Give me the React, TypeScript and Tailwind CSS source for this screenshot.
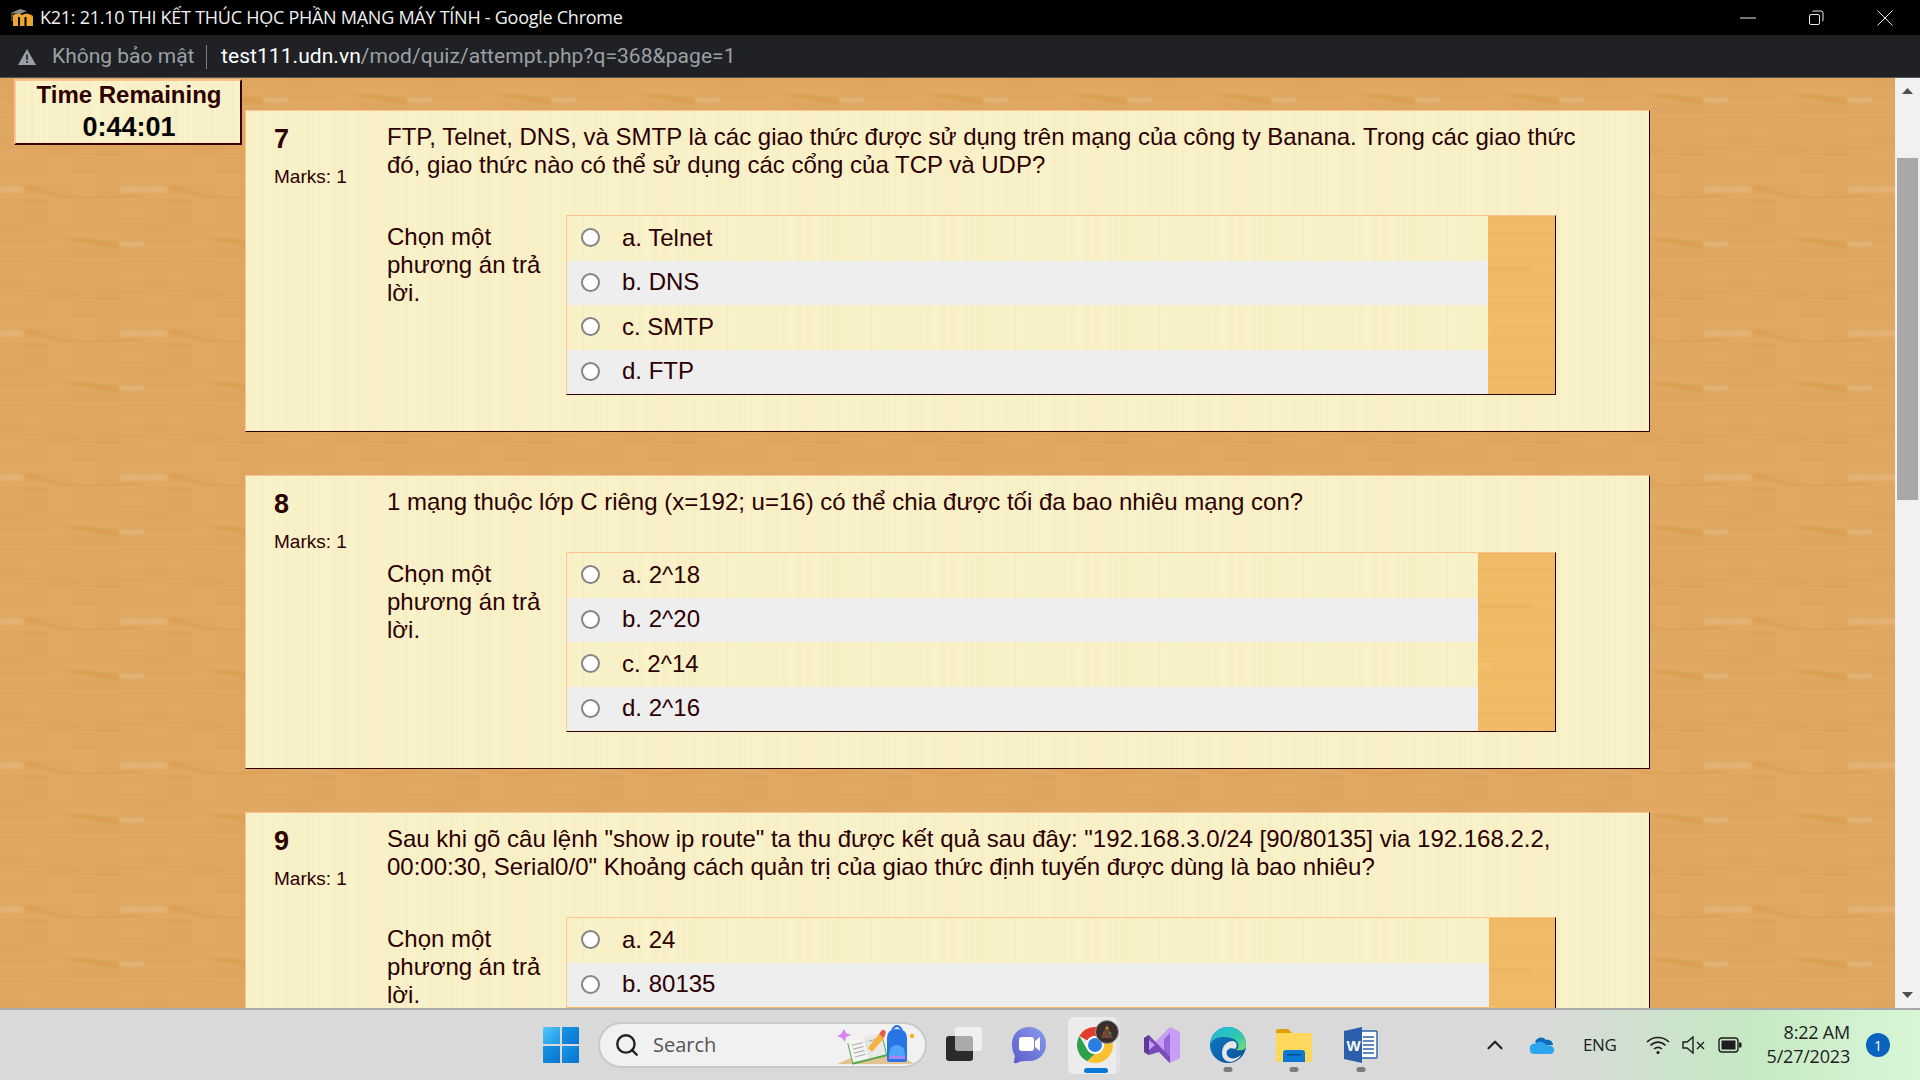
import React from "react";
import { Search, ChevronUp } from "lucide-react";

function rnd(seed: number) {
  const x = Math.sin(seed * 127.1 + 311.7) * 43758.5453;
  return x - Math.floor(x);
}

const woodLines = Array.from({ length: 72 }, (_, i) => ({
  y: i * 2,
  o: 0.05 + rnd(i) * 0.12,
  dark: rnd(i + 100) > 0.5,
}));
const woodBlocks = Array.from({ length: 36 }, (_, i) => ({
  x: (i % 6) * 24,
  y: Math.floor(i / 6) * 24,
  o: rnd(i + 300) * 0.09,
  light: rnd(i + 400) > 0.5,
}));
const creamLines = Array.from({ length: 72 }, (_, i) => ({
  x: i * 2,
  w: 1 + Math.floor(rnd(i + 500) * 4),
  o: rnd(i + 600) * 0.35,
  warm: rnd(i + 700) > 0.45,
}));

function Defs() {
  return (
    <svg width="0" height="0" className="absolute">
      <defs>
        <filter id="soft" x="-10%" y="-50%" width="120%" height="200%">
          <feGaussianBlur stdDeviation="0.9" />
        </filter>
        <pattern id="wood" width="144" height="144" patternUnits="userSpaceOnUse">
          <rect width="144" height="144" fill="#dfa761" />
          {woodBlocks.map((b, i) => (
            <rect key={i} x={b.x} y={b.y} width="24" height="24" fill={b.light ? "#e6b06c" : "#dc9f55"} opacity={b.o * 2} />
          ))}
          {woodLines.map((l, i) => (
            <rect key={i} x="0" y={l.y} width="144" height="1" fill={l.dark ? "#d29b55" : "#e8b474"} opacity={l.o * 1.2} />
          ))}
          <g filter="url(#soft)">
            <path d="M24 109 C34 108 44 111 52 115 C72 120 96 118 144 116 L144 118 C96 122 60 122 46 116 C40 113 32 112 24 113 Z" fill="#dc9f50" opacity="0.8" />
            <rect x="0" y="108" width="24" height="7" fill="#e6b67c" opacity="0.7" />
            <rect x="120" y="108" width="24" height="7" fill="#e6b67c" opacity="0.7" />
            <path d="M70 16 C88 16 100 20 119 21 L119 25 C100 26 90 22 70 18 Z" fill="#d99c4e" opacity="0.8" />
            <rect x="120" y="19" width="24" height="6" fill="#e6b67c" opacity="0.7" />
            <path d="M0 56 C30 52 60 60 144 54 L144 56 C60 62 30 54 0 58 Z" fill="#e6b06c" opacity="0.5" />
            <rect x="48" y="70" width="32" height="6" fill="#d99c4e" opacity="0.35" />
            <rect x="96" y="72" width="24" height="6" fill="#d99c4e" opacity="0.35" />
          </g>
        </pattern>
        <pattern id="wood2" width="144" height="144" patternUnits="userSpaceOnUse">
          <rect width="144" height="144" fill="#f1ba65" />
          {woodLines.map((l, i) => (
            <rect key={i} x="0" y={l.y} width="144" height="1" fill={l.dark ? "#e3aa55" : "#f5c479"} opacity={l.o * 1.3} />
          ))}
          <rect x="30" y="50" width="70" height="5" fill="#e6ab55" opacity="0.3" />
          <rect x="0" y="110" width="60" height="6" fill="#f7c878" opacity="0.4" />
        </pattern>
        <pattern id="cream" width="144" height="144" patternUnits="userSpaceOnUse">
          <rect width="144" height="144" fill="#f8f1c8" />
          {creamLines.map((l, i) => (
            <rect key={i} x={l.x} y="0" width={l.w} height="144" fill={l.warm ? "#f6e4b8" : "#fbf6d4"} opacity={l.o * 0.75} />
          ))}
        </pattern>
      </defs>
    </svg>
  );
}

function Texture({ id }: { id: string }) {
  return (
    <svg className="absolute inset-0 w-full h-full pointer-events-none" aria-hidden="true">
      <rect width="100%" height="100%" fill={`url(#${id})`} />
    </svg>
  );
}

function Row({ text, gray, width }: { text: string; gray: boolean; width: string }) {
  return (
    <div className={`relative flex items-center pl-[14px] pb-[2px] ${width} ${gray ? "h-[44px] bg-[#eeeeee]" : "h-[45px]"}`}>
      {!gray && <Texture id="cream" />}
      <span className="relative w-[19px] h-[19px] rounded-full bg-white border-2 border-[#858585]" />
      <span className="relative ml-[22px]">{text}</span>
    </div>
  );
}

type Q = { n: string; text: string[]; answers: string[]; width: string };

function Question({ q }: { q: Q }) {
  return (
    <section className="relative w-[1405px] shrink-0 border border-t-[#ffc48c] border-l-[#ffc48c] border-r-[#2d0000] border-b-[#2d0000] pt-[12px] pb-[36px] pl-[28px] flex text-[#2d0000]">
      <Texture id="cream" />
      <div className="relative w-[113px] shrink-0">
        <div className="text-[27px] font-bold leading-[30px] mt-[1px]">{q.n}</div>
        <div className="text-[19px] leading-[24px] mt-[11px]">Marks: 1</div>
      </div>
      <div className="relative w-[1210px] shrink-0">
        <div className="text-[24px] leading-[28px]">
          {q.text.map((t, i) => (
            <div key={i} className="whitespace-nowrap">{t}</div>
          ))}
        </div>
        <div className="flex mt-[36px]">
          <div className="w-[179px] shrink-0 pt-[8px] pr-[6px] text-[24px] leading-[28px]">Chọn một phương án trả lời.</div>
          <div className="relative w-[990px] shrink-0 min-h-[180px] border border-t-[#ffc48c] border-l-[#ffc48c] border-r-[#2d0000] border-b-[#2d0000] text-[24px]">
            <Texture id="wood2" />
            {q.answers.map((a, i) => (
              <Row key={a} text={a} gray={i % 2 === 1} width={q.width} />
            ))}
          </div>
        </div>
      </div>
    </section>
  );
}

const questions: Q[] = [
  {
    n: "7",
    text: [
      "FTP, Telnet, DNS, và SMTP là các giao thức được sử dụng trên mạng của công ty Banana. Trong các giao thức",
      "đó, giao thức nào có thể sử dụng các cổng của TCP và UDP?",
    ],
    answers: ["a. Telnet", "b. DNS", "c. SMTP", "d. FTP"],
    width: "w-[921px]",
  },
  {
    n: "8",
    text: ["1 mạng thuộc lớp C riêng (x=192; u=16) có thể chia được tối đa bao nhiêu mạng con?"],
    answers: ["a. 2^18", "b. 2^20", "c. 2^14", "d. 2^16"],
    width: "w-[911px]",
  },
  {
    n: "9",
    text: [
      'Sau khi gõ câu lệnh "show ip route" ta thu được kết quả sau đây: "192.168.3.0/24 [90/80135] via 192.168.2.2,',
      '00:00:30, Serial0/0" Khoảng cách quản trị của giao thức định tuyến được dùng là bao nhiêu?',
    ],
    answers: ["a. 24", "b. 80135"],
    width: "w-[922px]",
  },
];

function MoodleIcon() {
  return (
    <svg width="24" height="20" viewBox="0 0 24 20" className="shrink-0">
      <path d="M3 7 H8 V18 H3 Z M10 7 H14.5 V18 H10 Z M16.5 7 H21 Q23 7 23 9 V18 H16.5 Z" fill="#eda531" />
      <path d="M3 7 Q8 4 12 7 Q17 4 21 7 L21 9 H3 Z" fill="#eda531" />
      <path d="M1 5 L10 1 L17 3 L10 6 Z" fill="#8c8c8c" />
      <path d="M2 5 V13" stroke="#8c8c8c" strokeWidth="1" />
    </svg>
  );
}

function TitleBar() {
  return (
    <header className="h-[35px] bg-black flex items-center pl-[10px] text-white shrink-0">
      <MoodleIcon />
      <span className="ml-[6px] text-[18px] tracking-[-0.26px] whitespace-nowrap font-['Open_Sans',sans-serif] text-[#f0f0f0]">
        K21: 21.10 THI KẾT THÚC HỌC PHẦN MẠNG MÁY TÍNH - Google Chrome
      </span>
      <div className="ml-auto flex items-center h-full">
        <svg width="16" height="2" className="mr-[52px]"><rect width="16" height="1" y="0.5" fill="#e8e8e8" /></svg>
        <svg width="16" height="16" viewBox="0 0 16 16" fill="none" stroke="#e8e8e8" strokeWidth="1" className="mr-[53px]">
          <rect x="1.5" y="4.5" width="10" height="10" rx="1.5" />
          <path d="M4.5 2 Q5 1 6 1 H13 Q15 1 15 3 V10 Q15 11 14 11.5" />
        </svg>
        <svg width="16" height="16" viewBox="0 0 16 16" stroke="#e8e8e8" strokeWidth="1" className="mr-[27px]">
          <path d="M0.5 0.5 L15.5 15.5 M15.5 0.5 L0.5 15.5" />
        </svg>
      </div>
    </header>
  );
}

function AddressBar() {
  return (
    <div className="h-[43px] bg-[#202124] border-b border-[#555658] flex items-center pl-[17px] pt-[2px] shrink-0 font-['Roboto',sans-serif] text-[21px]">
      <svg width="20" height="18" viewBox="0 0 20 18" className="shrink-0">
        <path d="M10 1 L19 17 H1 Z" fill="#9aa0a6" />
        <rect x="9.2" y="6.5" width="1.6" height="5.5" fill="#202124" />
        <rect x="9.2" y="13" width="1.6" height="1.8" fill="#202124" />
      </svg>
      <span className="ml-[15px] text-[#9aa0a6] w-[142px] whitespace-nowrap">Không bảo mật</span>
      <span className="ml-[12px] w-px h-[24px] bg-[#7a7d82]" />
      <span className="ml-[14px] whitespace-nowrap tracking-[0.06px]">
        <span className="text-white">test111.udn.vn</span>
        <span className="text-[#9aa0a6]">/mod/quiz/attempt.php?q=368&amp;page=1</span>
      </span>
    </div>
  );
}

function Scrollbar() {
  return (
    <div className="w-[25px] bg-[#f1f1f1] shrink-0 relative flex flex-col items-center">
      <svg width="11" height="6" className="mt-[10px]"><path d="M0 6 L5.5 0 L11 6 Z" fill="#505050" /></svg>
      <div className="mt-[64px] w-[21px] h-[342px] bg-[#a8a8a8]" />
      <svg width="11" height="6" className="mt-auto mb-[10px]"><path d="M0 0 L5.5 6 L11 0 Z" fill="#505050" /></svg>
    </div>
  );
}

function WinLogo() {
  return (
    <svg width="36" height="36" viewBox="0 0 36 36">
      <defs>
        <linearGradient id="w1" x1="0" y1="0" x2="1" y2="1">
          <stop offset="0" stopColor="#52c7fa" />
          <stop offset="1" stopColor="#1a96e4" />
        </linearGradient>
        <linearGradient id="w2" x1="0" y1="0" x2="1" y2="1">
          <stop offset="0" stopColor="#1b97e5" />
          <stop offset="1" stopColor="#0673cf" />
        </linearGradient>
      </defs>
      <path d="M1 0 H17 V17 H0 V1 Q0 0 1 0 Z" fill="url(#w1)" />
      <path d="M19 0 H35 Q36 0 36 1 V17 H19 Z" fill="url(#w2)" />
      <path d="M0 19 H17 V36 H1 Q0 36 0 35 Z" fill="url(#w2)" />
      <path d="M19 19 H36 V35 Q36 36 35 36 H19 Z" fill="url(#w2)" />
    </svg>
  );
}

function SearchArt() {
  return (
    <svg width="84" height="44" viewBox="0 0 84 44" className="absolute right-[5px] top-[-2px]">
      <path d="M1 42 L24 32 H62 L78 42 Z" fill="#e3c392" />
      <path d="M8 7 L10 11 L15 13 L10 15 L9 20 L6 16 L1 14 L5 12 Z" fill="#d685f0" />
      <circle cx="46" cy="26" r="2.2" fill="#7bdcf0" />
      <circle cx="76" cy="14" r="2.2" fill="#fbb024" />
      <g transform="rotate(-14 30 26)">
        <rect x="13" y="17" width="36" height="22" fill="#55a84a" />
        <rect x="14" y="15" width="17" height="22" fill="#f3f3f0" />
        <rect x="31" y="15" width="17" height="22" fill="#e8e8e6" />
        <path d="M17 20 H28 M17 24 H28 M17 28 H28 M17 32 H28 M34 20 H44" stroke="#aaa" strokeWidth="1" />
      </g>
      <path d="M32 26 L43 12 L48 16 L36 30 Z" fill="#f5b23d" />
      <path d="M43 12 L46 8 Q48 7 50 10 L48 16 Z" fill="#e85a4f" />
      <path d="M51 38 V16 Q51 7 61 7 Q71 7 71 16 V38 Q71 40 69 40 H53 Q51 40 51 38 Z" fill="#2a75e6" />
      <path d="M56 8 Q61 0 66 8" fill="none" stroke="#2a75e6" strokeWidth="2" />
      <path d="M53 34 Q53 23 61 23 Q69 23 69 34 Z" fill="#4fa4fb" />
      <path d="M53 34 H69 V37 H53 Z" fill="#a58af5" />
    </svg>
  );
}

function MeetIcon() {
  return (
    <svg width="34" height="38" viewBox="0 0 34 38">
      <defs>
        <linearGradient id="m1" x1="0" y1="1" x2="1" y2="0">
          <stop offset="0" stopColor="#5b5bc8" />
          <stop offset="1" stopColor="#8a9cf0" />
        </linearGradient>
      </defs>
      <path d="M17 1 C27 1 34 8 34 18 C34 28 27 35 17 35 C12 35 9 35 5 37 Q1 38 2 35 L3 30 C1 27 0 23 0 18 C0 8 7 1 17 1 Z" fill="url(#m1)" />
      <rect x="7" y="11" width="15" height="14" rx="3" fill="#fff" />
      <path d="M23 15 L28 11 V25 L23 21 Z" fill="#fff" />
    </svg>
  );
}

function ChromeIcon() {
  return (
    <svg width="36" height="36" viewBox="0 0 36 36">
      <path d="M2.4 9 A18 18 0 0 1 33.6 9 L18 9 A9 9 0 0 0 10.2 13.5 Z" fill="#e33b2e" />
      <path d="M2.4 9 L10.2 22.5 A9 9 0 0 0 18 27 L10.2 34.2 A18 18 0 0 1 2.4 9 Z" fill="#2ca24c" />
      <path d="M33.6 9 A18 18 0 0 1 10.2 34.2 L18 27 A9 9 0 0 0 25.8 22.5 A9 9 0 0 0 25.8 13.5 L18 9 Z" fill="#fbc02d" />
      <circle cx="18" cy="18" r="9" fill="#fff" />
      <circle cx="18" cy="18" r="7" fill="#2a7de1" />
    </svg>
  );
}

function Avatar() {
  return (
    <svg width="24" height="24" viewBox="0 0 24 24" className="absolute right-[-3px] top-[3px]">
      <circle cx="12" cy="12" r="11.5" fill="#3a2e2c" stroke="#9a9a9a" strokeWidth="1" />
      <path d="M12 4 L18 18 H6 Z" fill="#6b4a32" />
      <circle cx="12" cy="8" r="1.3" fill="#c9962d" />
      <circle cx="9" cy="13" r="1.3" fill="#b1382e" />
      <circle cx="15" cy="13" r="1.3" fill="#3f8a4a" />
      <circle cx="12" cy="16" r="1.3" fill="#7a3f9a" />
    </svg>
  );
}

function VSIcon() {
  return (
    <svg width="36" height="36" viewBox="0 0 36 36">
      <path d="M26 0 L36 5 V31 L26 36 L8 18 Z" fill="#c79ef5" />
      <path d="M26 0 V36 L20 30 V12 L26 6 Z" fill="#9767d8" />
      <path d="M0 11 L5 8 L26 30 V36 L15 25 L5 28 L0 25 Z" fill="#7a4bb8" />
      <path d="M5 13 V23 L11 18 Z" fill="#c79ef5" />
      <path d="M0 11 L5 8 V28 L0 25 Z" fill="#5f3b98" />
    </svg>
  );
}

function EdgeIcon() {
  return (
    <svg width="36" height="36" viewBox="0 0 36 36">
      <defs>
        <linearGradient id="e1" x1="0" y1="0" x2="1" y2="1">
          <stop offset="0" stopColor="#1fb5e8" />
          <stop offset="0.6" stopColor="#30c9a9" />
          <stop offset="1" stopColor="#7ee06a" />
        </linearGradient>
        <linearGradient id="e2" x1="0" y1="0" x2="1" y2="1">
          <stop offset="0" stopColor="#0f7dc8" />
          <stop offset="1" stopColor="#0a4f96" />
        </linearGradient>
      </defs>
      <circle cx="18" cy="18" r="18" fill="url(#e2)" />
      <path d="M0 17 C1 7 9 0 18 0 C29 0 36 8 36 18 C36 23 31 24 26 23 C30 21 29 15 24 12 C15 8 3 10 0 17 Z" fill="url(#e1)" />
      <path d="M22 14 C27 14 28 19 25 22 C21 20 15 22 17 28 C19 32 25 33 31 28 C27 35 18 37 14 32 C10 27 12 15 22 14 Z" fill="#e6e6e6" />
    </svg>
  );
}

function FolderIcon() {
  return (
    <svg width="36" height="36" viewBox="0 0 36 36">
      <path d="M0 4 Q0 2 2 2 H12 L16 6 H34 Q36 6 36 8 V12 H0 Z" fill="#dfa000" />
      <rect x="0" y="6" width="36" height="29" rx="1" fill="#fdd85c" />
      <path d="M7 35 V26 Q7 23 10 23 H26 Q29 23 29 26 V35 Z" fill="#0c78d2" />
      <rect x="11" y="27" width="14" height="1.6" fill="#064f96" />
    </svg>
  );
}

function WordIcon() {
  return (
    <svg width="34" height="36" viewBox="0 0 34 36">
      <path d="M16 4 H32 Q33 4 33 5 V30 Q33 31 32 31 H16 Z" fill="#fff" stroke="#2b5fab" strokeWidth="1.4" />
      <path d="M19 10 H30 M19 14 H30 M19 18 H30 M19 22 H30 M19 26 H30" stroke="#2b5fab" strokeWidth="1.4" />
      <path d="M0 4 L18 0 V36 L0 32 Z" fill="#2b5fab" />
      <text x="2.5" y="24" fontFamily="'Liberation Sans', sans-serif" fontWeight="700" fontSize="15" fill="#fff">W</text>
    </svg>
  );
}

function Dot() {
  return <span className="absolute left-1/2 -translate-x-1/2 top-[40px] w-[9px] h-[5px] rounded-full bg-[#7b7b7b]" />;
}

function Taskbar() {
  return (
    <footer className="h-[72px] shrink-0 border-t-2 border-[#a9a9a9] bg-[linear-gradient(90deg,#d9d9d9_0%,#d9d9d9_80%,#c6e8c4_91%,#d8f6d6_100%)] flex items-center pl-[543px] text-[#1d1d1d] font-['Open_Sans',sans-serif]">
      <WinLogo />
      <div className="relative ml-[19px] w-[329px] h-[46px] rounded-full bg-[#f1f1f1] border-2 border-[#c9c9c9] flex items-center pl-[14px]">
        <Search size={26} strokeWidth={2.2} className="text-[#222]" />
        <span className="ml-[13px] text-[20px] text-[#555]">Search</span>
        <SearchArt />
      </div>
      <div className="relative ml-[19px] w-[36px] h-[36px]">
        <div className="absolute left-0 top-[9px] w-[27px] h-[25px] rounded-[3px] bg-[#2b2b2b]" />
        <div className="absolute left-[9px] top-0 w-[27px] h-[24px] rounded-[3px] bg-[#ffffff]/60" />
      </div>
      <div className="ml-[30px]"><MeetIcon /></div>
      <div className="relative ml-[22px] w-[52px] h-[57px] rounded-[6px] bg-[#ececec] border-r-4 border-[#e2e2e2] flex justify-center items-center pl-[5px]">
        <ChromeIcon />
        <Avatar />
        <span className="absolute left-[16px] bottom-[1px] w-[24px] h-[5px] rounded-full bg-[#0a78d6]" />
      </div>
      <div className="ml-[24px]"><VSIcon /></div>
      <div className="relative ml-[30px]"><EdgeIcon /><Dot /></div>
      <div className="relative ml-[30px]"><FolderIcon /><Dot /></div>
      <div className="relative ml-[32px]"><WordIcon /><Dot /></div>

      <ChevronUp size={26} strokeWidth={2} className="ml-[104px] text-[#222]" />
      <svg width="26" height="18" viewBox="0 0 26 18" className="ml-[21px]">
        <path d="M6 6 C8 1 14 0 17 4 C21 3 24 6 24 9 L10 10 Z" fill="#0f6cbd" />
        <path d="M1 14 C0 10 3 7 6 8 C10 4 16 6 18 10 C22 9 26 11 25 15 C25 17 23 18 21 18 H5 C3 18 1 17 1 14 Z" fill="#2aa5ee" />
      </svg>
      <span className="ml-[28px] text-[17px] w-[36px] tracking-[-0.4px]">ENG</span>
      <svg width="24" height="20" viewBox="0 0 24 20" fill="none" stroke="#1d1d1d" strokeWidth="1.6" className="ml-[27px]">
        <path d="M1 7 C7 1 17 1 23 7 M4.5 10.5 C9 6 15 6 19.5 10.5 M8 14 C10.5 12 13.5 12 16 14" />
        <circle cx="12" cy="17.5" r="1.6" fill="#1d1d1d" stroke="none" />
      </svg>
      <svg width="24" height="18" viewBox="0 0 24 18" fill="none" stroke="#1d1d1d" strokeWidth="1.4" className="ml-[12px]">
        <path d="M1 6 H5 L11 1 V17 L5 12 H1 Z" />
        <path d="M15 6 L22 13 M22 6 L15 13" />
      </svg>
      <svg width="24" height="16" viewBox="0 0 24 16" className="ml-[12px]">
        <rect x="1" y="1" width="19" height="14" rx="3" fill="none" stroke="#1d1d1d" strokeWidth="1.4" />
        <rect x="3.5" y="3.5" width="14" height="9" fill="#1d1d1d" />
        <path d="M21 5.5 H22.5 Q23.5 5.5 23.5 6.5 V9.5 Q23.5 10.5 22.5 10.5 H21 Z" fill="#1d1d1d" />
      </svg>
      <div className="ml-[22px] w-[86px] flex flex-col items-end text-[18px] leading-[24px] whitespace-nowrap tracking-[-0.2px] pb-[2px]">
        <span>8:22 AM</span>
        <span>5/27/2023</span>
      </div>
      <span className="ml-[16px] w-[24px] h-[24px] rounded-full bg-[#0a63bd] text-white text-[14px] flex items-center justify-center">1</span>
    </footer>
  );
}

export default function App() {
  return (
    <div className="w-[1920px] h-[1080px] overflow-hidden flex flex-col font-['Liberation_Sans',Arial,sans-serif]">
      <Defs />
      <TitleBar />
      <AddressBar />
      <main className="flex-1 min-h-0 flex overflow-hidden">
        <div className="relative flex-1 flex min-w-0 overflow-hidden">
          <Texture id="wood" />
          <aside className="relative w-[245px] shrink-0 pl-[14px] pt-[1px]">
            <div className="relative w-[228px] h-[66px] border-2 border-t-[#ffc48c] border-l-[#ffc48c] border-r-[#3a0000] border-b-[#3a0000] text-center font-bold pl-[2px]">
              <Texture id="cream" />
              <div className="relative text-[24px] leading-[30px] text-[#2d0000] mt-[-1px]">Time Remaining</div>
              <div className="relative text-[27px] leading-[32px] text-black mt-[1px]">0:44:01</div>
            </div>
          </aside>
          <div className="relative flex flex-col gap-[43px] pt-[32px]">
            {questions.map((q) => (
              <Question key={q.n} q={q} />
            ))}
          </div>
        </div>
        <Scrollbar />
      </main>
      <Taskbar />
    </div>
  );
}
